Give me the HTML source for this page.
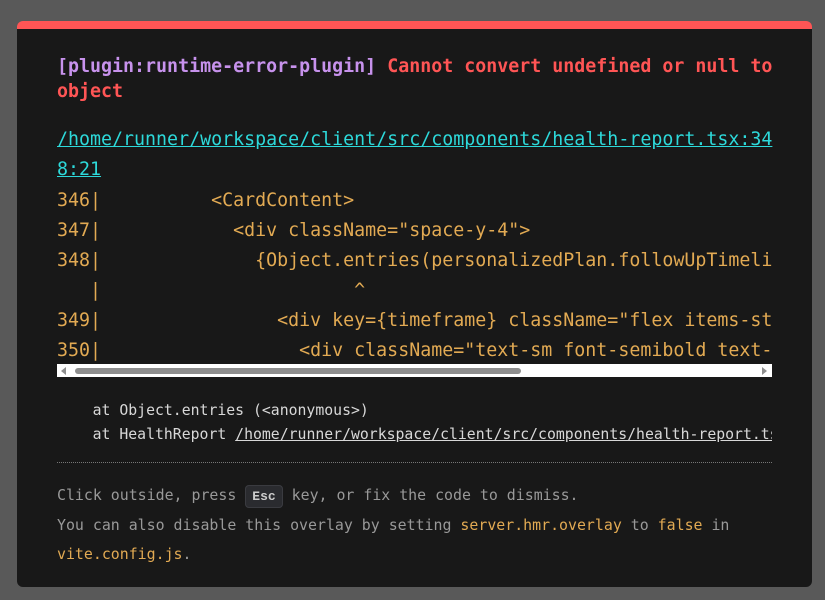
<!DOCTYPE html>
<html><head><meta charset="utf-8"><style>
html,body{margin:0;padding:0;width:825px;height:600px;background:#595959;overflow:hidden}
.card{position:absolute;left:17px;top:21px;width:795px;height:566px;background:#181818;border-radius:6px;border-top:8px solid #ff5555;box-sizing:border-box;font-family:"Liberation Mono",monospace}
.in{position:absolute;left:40px;top:0;width:715px}
.msg{position:absolute;top:25px;font-size:18.3px;line-height:25px;font-weight:bold;color:#ff5555;white-space:pre;margin:0}
.p{color:#c792ec}
.file{position:absolute;top:96px;font-size:18.3px;line-height:30px;color:#2dd9da;text-decoration:underline;white-space:pre;margin:0}
.code{position:absolute;top:157px;width:715px;height:178px;overflow:hidden;font-size:18.3px;line-height:30px;color:#e2aa53;white-space:pre;margin:0}
.sb{position:absolute;top:335px;left:0;width:715px;height:13px;background:#fff}
.th{position:absolute;left:18px;top:4px;width:446px;height:6px;background:#8e8e8e;border-radius:3px}
.al{position:absolute;left:4px;top:3px;width:0;height:0;border-top:4px solid transparent;border-bottom:4px solid transparent;border-right:5px solid #8e8e8e}
.ar{position:absolute;right:5px;top:3px;width:0;height:0;border-top:4px solid transparent;border-bottom:4px solid transparent;border-left:5px solid #8e8e8e}
.stack{position:absolute;top:370px;width:715px;overflow:hidden;font-size:14.8px;line-height:24px;color:#d8d8d8;white-space:pre;margin:0}
.stack u{text-decoration:underline}
.hr{position:absolute;top:433px;width:715px;border-top:1px dotted #777}
.tip{position:absolute;top:452px;font-size:14.9px;line-height:29px;color:#999;white-space:pre;margin:0}
.tip b{font-weight:normal;color:#e2aa53}
kbd{font-family:"Liberation Mono",monospace;font-weight:bold;color:#ccc;background:#2a2b2f;border:1px solid #3a3b40;border-radius:4px;padding:3px 6px;font-size:13px}
</style></head><body>
<div class="card"><div class="in">
<pre class="msg"><span class="p">[plugin:runtime-error-plugin]</span> Cannot convert undefined or null to
object</pre>
<pre class="file">/home/runner/workspace/client/src/components/health-report.tsx:34
8:21</pre>
<pre class="code">346|          &lt;CardContent&gt;
347|            &lt;div className="space-y-4"&gt;
348|              {Object.entries(personalizedPlan.followUpTimeline).map
   |                       ^
349|                &lt;div key={timeframe} className="flex items-start gap-3"&gt;
350|                  &lt;div className="text-sm font-semibold text-primary"&gt;</pre>
<div class="sb"><div class="al"></div><div class="th"></div><div class="ar"></div></div>
<pre class="stack">    at Object.entries (&lt;anonymous&gt;)
    at HealthReport <u>/home/runner/workspace/client/src/components/health-report.tsx:348:21</u></pre>
<div class="hr"></div>
<pre class="tip">Click outside, press <kbd>Esc</kbd> key, or fix the code to dismiss.
You can also disable this overlay by setting <b>server.hmr.overlay</b> to <b>false</b> in
<b>vite.config.js</b>.</pre>
</div></div>
</body></html>
